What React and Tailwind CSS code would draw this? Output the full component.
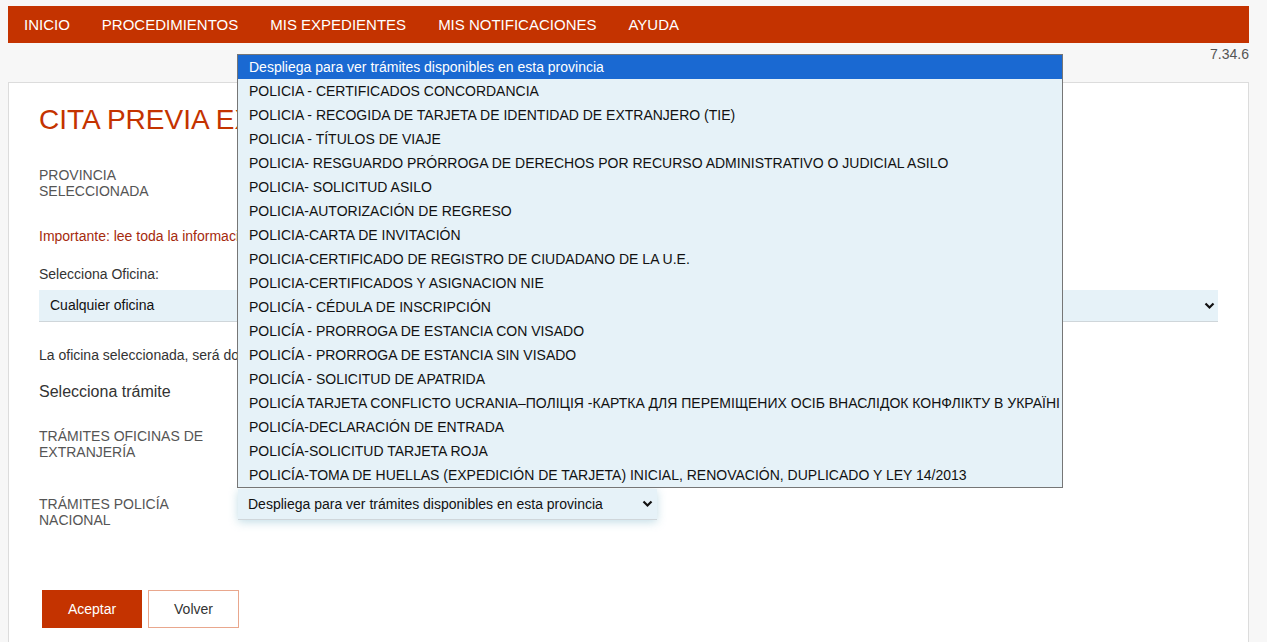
import React from 'react';

const navItems = ['INICIO', 'PROCEDIMIENTOS', 'MIS EXPEDIENTES', 'MIS NOTIFICACIONES', 'AYUDA'];

const tramites = [
  'POLICIA - CERTIFICADOS CONCORDANCIA',
  'POLICIA - RECOGIDA DE TARJETA DE IDENTIDAD DE EXTRANJERO (TIE)',
  'POLICIA - TÍTULOS DE VIAJE',
  'POLICIA- RESGUARDO PRÓRROGA DE DERECHOS POR RECURSO ADMINISTRATIVO O JUDICIAL ASILO',
  'POLICIA- SOLICITUD ASILO',
  'POLICIA-AUTORIZACIÓN DE REGRESO',
  'POLICIA-CARTA DE INVITACIÓN',
  'POLICIA-CERTIFICADO DE REGISTRO DE CIUDADANO DE LA U.E.',
  'POLICIA-CERTIFICADOS Y ASIGNACION NIE',
  'POLICÍA - CÉDULA DE INSCRIPCIÓN',
  'POLICÍA - PRORROGA DE ESTANCIA CON VISADO',
  'POLICÍA - PRORROGA DE ESTANCIA SIN VISADO',
  'POLICÍA - SOLICITUD DE APATRIDA',
  'POLICÍA TARJETA CONFLICTO UCRANIA–ПОЛІЦІЯ -КАРТКА ДЛЯ ПЕРЕМІЩЕНИХ ОСІБ ВНАСЛІДОК КОНФЛІКТУ В УКРАЇНІ',
  'POLICÍA-DECLARACIÓN DE ENTRADA',
  'POLICÍA-SOLICITUD TARJETA ROJA',
  'POLICÍA-TOMA DE HUELLAS (EXPEDICIÓN DE TARJETA) INICIAL, RENOVACIÓN, DUPLICADO Y LEY 14/2013',
];

function Chevron() {
  return (
    <svg width="11" height="8" viewBox="0 0 11 8" className="shrink-0">
      <path d="M1.5 1.5 L5.5 5.5 L9.5 1.5" fill="none" stroke="#111" strokeWidth="2.2" />
    </svg>
  );
}

function FakeSelect({ label, className }) {
  return (
    <div
      className={`flex items-center justify-between bg-[#e6f2f8] border-b border-[#cfd6da] text-[14px] text-[#111] ${className}`}
    >
      <span className="whitespace-nowrap">{label}</span>
      <Chevron />
    </div>
  );
}

export default function App() {
  return (
    <div
      className="relative min-h-[642px] bg-[#f7f7f7] pl-2 pr-[18px] pt-[6px] text-[#333]"
      style={{ fontFamily: '"Liberation Sans", Arial, sans-serif' }}
    >
      <nav className="flex h-[37px] items-center bg-[#c43300]">
        {navItems.map((item) => (
          <a key={item} href="#" className="px-4 text-[15px] leading-[18px] text-white">
            {item}
          </a>
        ))}
      </nav>

      <div className="flex h-[39px] justify-end pt-[3px] text-[14px] leading-4 text-[#555]">7.34.6</div>

      <div className="border border-[#dcdcdc] bg-white pl-[30px] pr-[30px] pt-[21px] pb-[20px]">
        <h1 className="text-[28px] leading-[32px] text-[#c43300]">CITA PREVIA EXTRANJERÍA</h1>

        <div className="mt-[31px] flex">
          <div className="w-[199px] text-[14px] leading-4 text-[#555]">
            PROVINCIA
            <br />
            SELECCIONADA
          </div>
          <div className="text-[14px] leading-4 text-[#333]">Madrid</div>
        </div>

        <p className="mt-[29px] text-[14px] leading-4 text-[#a52a0d]">
          Importante: lee toda la información antes de solicitar la cita.
        </p>

        <p className="mt-[22px] text-[14px] leading-4 text-[#333]">Selecciona Oficina:</p>
        <FakeSelect label="Cualquier oficina" className="mt-2 h-[32px] pl-[11px] pr-[3px]" />

        <p className="mt-[25px] text-[14px] leading-4 text-[#333]">
          La oficina seleccionada, será donde deberá personarse.
        </p>

        <p className="mt-[20px] text-[16px] leading-[18px] text-[#333]">Selecciona trámite</p>

        <div className="mt-[20px] flex items-start">
          <div className="w-[199px] pt-[7px] text-[14px] leading-4 text-[#555]">
            TRÁMITES OFICINAS DE
            <br />
            EXTRANJERÍA
          </div>
          <FakeSelect
            label="Despliega para ver trámites disponibles en esta provincia"
            className="h-[31px] w-[419px] pl-[10px] pr-[4px]"
          />
        </div>

        <div className="mt-[29px] flex items-start">
          <div className="w-[199px] pt-[7px] text-[14px] leading-4 text-[#555]">
            TRÁMITES POLICÍA
            <br />
            NACIONAL
          </div>
          <FakeSelect
            label="Despliega para ver trámites disponibles en esta provincia"
            className="h-[31px] w-[419px] pl-[10px] pr-[4px] shadow-[0_2px_10px_rgba(120,180,200,0.45)]"
          />
        </div>

        <div className="mt-[62px] ml-[3px] flex gap-[6px]">
          <button className="h-[38px] w-[100px] bg-[#c43300] text-[14px] text-white">Aceptar</button>
          <button className="h-[38px] w-[91px] border border-[#e9a78d] bg-white text-[14px] text-[#333]">
            Volver
          </button>
        </div>
      </div>

      <ul className="absolute left-[237px] top-[54px] w-[826px] overflow-hidden border border-[#767676] bg-[#e6f2f8] text-[14px] text-[#111]">
        <li className="h-[24px] whitespace-nowrap bg-[#1a69d2] pl-[11px] leading-[24px] text-white">
          Despliega para ver trámites disponibles en esta provincia
        </li>
        {tramites.map((t) => (
          <li key={t} className="h-[24px] whitespace-nowrap pl-[11px] leading-[24px]">
            {t}
          </li>
        ))}
      </ul>
    </div>
  );
}
